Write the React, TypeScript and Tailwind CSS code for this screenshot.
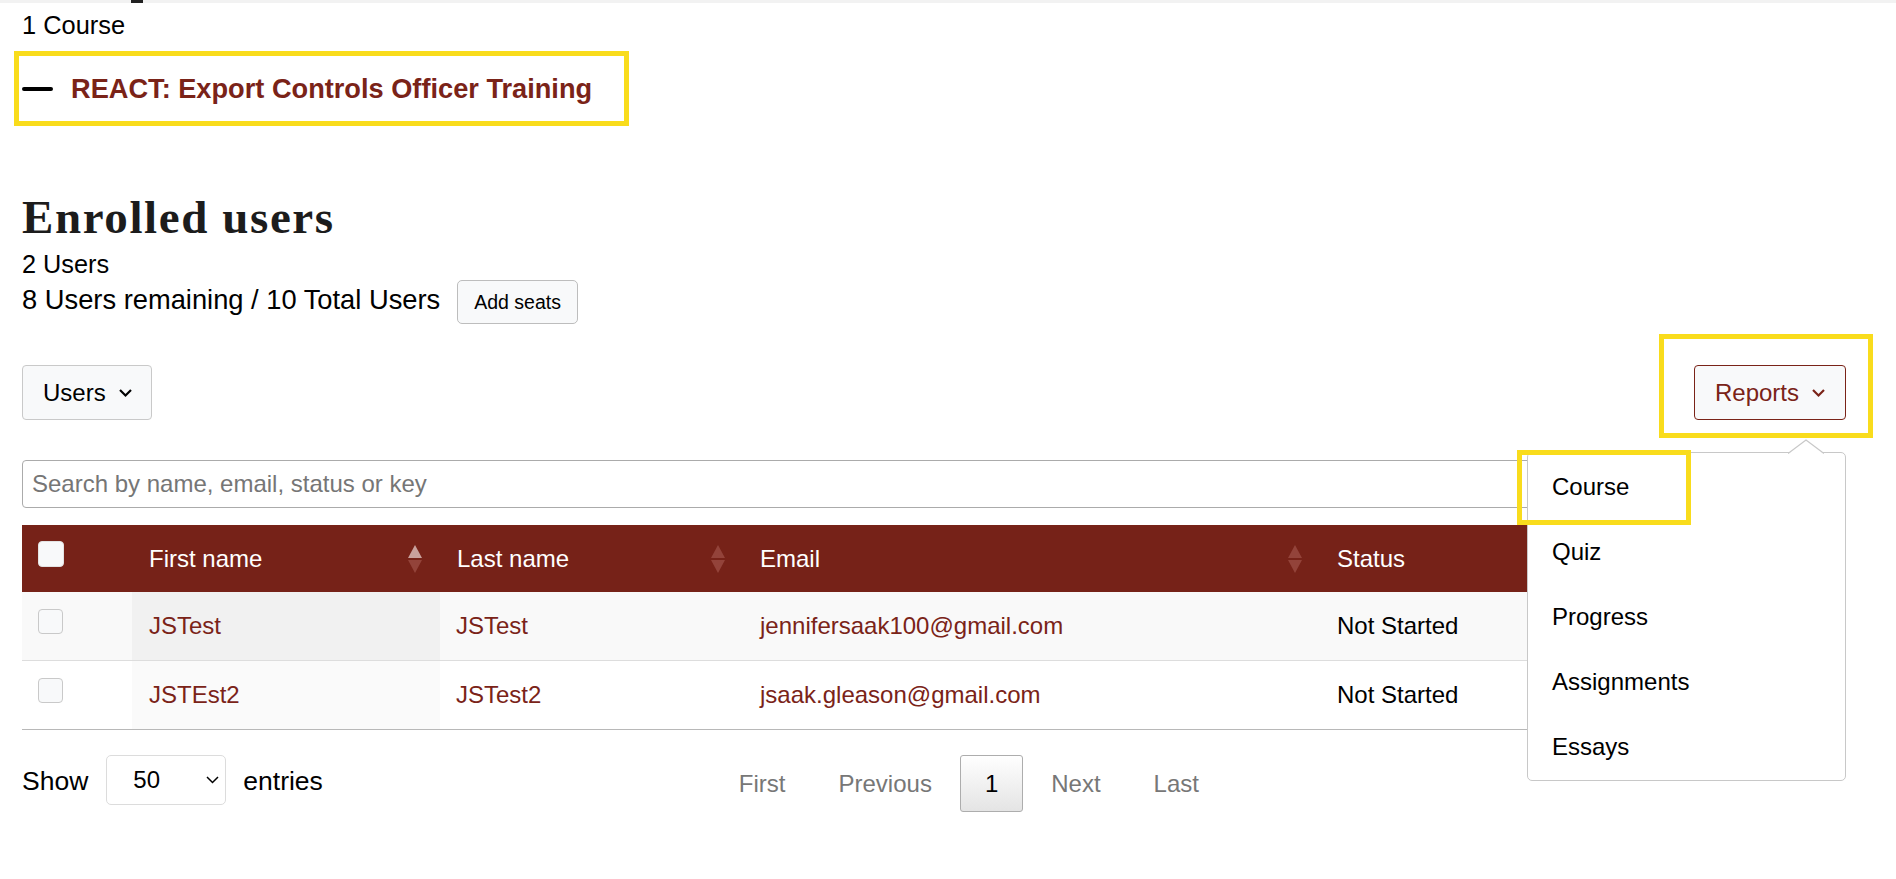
import React from "react"

const users = [
  { first: "JSTest", last: "JSTest", email: "jennifersaak100@gmail.com", status: "Not Started" },
  { first: "JSTEst2", last: "JSTest2", email: "jsaak.gleason@gmail.com", status: "Not Started" },
]

const reportItems = ["Course", "Quiz", "Progress", "Assignments", "Essays"]

function Chevron({ color = "#000", thin }: { color?: string; thin?: boolean }) {
  return (
    <svg width="15" height="10" viewBox="0 0 15 10" fill="none">
      <polyline points="2,2 7.5,7.5 13,2" stroke={color} strokeWidth={thin ? "1.5" : "2.2"} />
    </svg>
  )
}

function SortIcon({ asc }: { asc?: boolean }) {
  return (
    <svg width="14" height="28" viewBox="0 0 14 28" className="shrink-0">
      <path d="M7 0 L14 13 L0 13 Z" fill={asc ? "#c9a19c" : "#93433a"} />
      <path d="M0 15 L14 15 L7 28 Z" fill="#93433a" />
    </svg>
  )
}

function Check({ header }: { header?: boolean }) {
  return (
    <div
      className={
        header
          ? "w-[26px] h-[26px] rounded-[4px] bg-[#f8f9fa] border border-[#e3e3e3] mb-[9px]"
          : "w-[25px] h-[25px] rounded-[4px] bg-[#f8f9fa] border border-[#c9c9c9] mb-[9px]"
      }
    />
  )
}

function HeaderCell({ label, asc }: { label: string; asc?: boolean }) {
  return (
    <th className="p-0 font-normal text-left">
      <div className="flex items-center justify-between pl-[17px] pr-[18px] h-[67px]">
        <span>{label}</span>
        <SortIcon asc={asc} />
      </div>
    </th>
  )
}

export default function App() {
  return (
    <div className="min-h-screen bg-white text-black font-['Liberation_Sans',Arial,sans-serif] text-[24px] leading-[36px]">
      <div className="h-[3px] bg-[#f2f2f2] pl-[131px]">
        <div className="h-[3px] w-[12px] bg-[#222]" />
      </div>

      <div className="pl-[22px] w-[1846px]">
        <div className="mt-[4px] text-[25.4px]">1 Course</div>

        <div className="mt-[8px] -ml-[8px] w-[615px] h-[75px] border-[5px] border-[#f9dc1c] flex items-center pl-[3px]">
          <div className="w-[31px] h-[4px] bg-black rounded-full" />
          <span className="ml-[18px] font-bold text-[27.2px] text-[#7a2318]">
            REACT: Export Controls Officer Training
          </span>
        </div>

        <h1 className="mt-[63px] font-['Liberation_Serif',Georgia,serif] font-bold text-[47px] leading-[56px] tracking-[1.6px] text-[#1c1c1c]">
          Enrolled users
        </h1>
        <div className="mt-[1px] text-[25.3px]">2 Users</div>
        <div className="flex items-start h-[36px]">
          <span className="text-[27.3px]">8 Users remaining / 10 Total Users</span>
          <button className="ml-[17px] -mt-[2px] h-[44px] px-[16px] border border-[#bdbdbd] rounded-[5px] bg-[#f8f9fa] text-[19.5px] leading-[22px] text-black">
            Add seats
          </button>
        </div>

        <div className="mt-[47px] flex justify-between items-start">
          <button className="h-[55px] pl-[20px] pr-[18px] flex items-center gap-[12px] border border-[#c9c9c9] rounded-[4px] bg-[#f8f9fa]">
            <span>Users</span>
            <Chevron />
          </button>

          <div className="relative">
            <button className="h-[55px] pl-[20px] pr-[19px] flex items-center gap-[12px] border border-[#7a2318] rounded-[4px] bg-[#f8f9fa] text-[#7a2318]">
              <span>Reports</span>
              <Chevron color="#7a2318" />
            </button>

            <div className="absolute z-10 right-0 top-[87px] w-[319px] py-[1px] bg-white border border-[#c8c8c8] rounded-[5px]">
              <svg width="36" height="15" viewBox="0 0 36 15" className="absolute -top-[14px] right-[21px]">
                <path d="M0 15 L18 1 L36 15 Z" fill="#fff" />
                <path d="M0 14.5 L18 1 L36 14.5" fill="none" stroke="#c8c8c8" strokeWidth="1.2" />
              </svg>
              {reportItems.map((item) => (
                <div key={item} className="h-[65px] flex items-center pl-[24px] text-black">
                  {item}
                </div>
              ))}
              <div className="absolute -left-[11px] -top-[3px] w-[174px] h-[75px] border-[5px] border-[#f9dc1c] pointer-events-none" />
            </div>

            <div className="absolute z-20 -left-[35px] -top-[31px] w-[214px] h-[104px] border-[5px] border-[#f9dc1c] pointer-events-none" />
          </div>
        </div>

        <div className="mt-[40px] h-[48px] border border-[#ababab] rounded-[4px] flex items-center pl-[9px] text-[#767676]">
          Search by name, email, status or key
        </div>

        <table className="mt-[17px] w-full table-fixed border-collapse">
          <colgroup>
            <col className="w-[110px]" />
            <col className="w-[308px]" />
            <col className="w-[303px]" />
            <col className="w-[577px]" />
            <col />
          </colgroup>
          <thead>
            <tr className="bg-[#762218] text-white">
              <th className="p-0">
                <div className="h-[67px] flex items-center pl-[16px]">
                  <Check header />
                </div>
              </th>
              <HeaderCell label="First name" asc />
              <HeaderCell label="Last name" />
              <HeaderCell label="Email" />
              <HeaderCell label="Status" />
            </tr>
          </thead>
          <tbody>
            {users.map((u, i) => (
              <tr
                key={u.email}
                className={
                  i === 0
                    ? "bg-[#f9f9f9] border-b border-[#dddddd]"
                    : "bg-white border-b border-[#b8b8b8]"
                }
              >
                <td className="p-0">
                  <div className="h-[68px] flex items-center pl-[16px]">
                    <Check />
                  </div>
                </td>
                <td className={i === 0 ? "pl-[17px] bg-[#f1f1f1] text-[#7a2318]" : "pl-[17px] bg-[#fafafa] text-[#7a2318]"}>
                  {u.first}
                </td>
                <td className="pl-[16px] text-[#7a2318]">{u.last}</td>
                <td className="pl-[17px] text-[#7a2318]">{u.email}</td>
                <td className="pl-[17px]">{u.status}</td>
              </tr>
            ))}
          </tbody>
        </table>

        <div className="mt-[25px] flex items-start">
          <span className="mt-[8px] text-[26.5px]">Show</span>
          <div className="ml-[18px] w-[120px] h-[50px] border border-[#dcdcdc] rounded-[5px] flex items-center justify-between pl-[26px] pr-[5px]">
            <span>50</span>
            <Chevron thin />
          </div>
          <span className="ml-[17px] mt-[8px] text-[26.5px]">entries</span>

          <div className="ml-[388px] flex items-start text-[#777777]">
            {["First", "Previous", "1", "Next", "Last"].map((p) => (
              <span
                key={p}
                className={
                  p === "1"
                    ? "ml-[3px] px-[24px] py-[10px] leading-[35px] border border-[#adadad] rounded-[3px] bg-gradient-to-b from-white to-[#e4e4e4] text-black"
                    : "ml-[3px] px-[24px] py-[10px] leading-[35px] border border-transparent"
                }
              >
                {p}
              </span>
            ))}
          </div>
        </div>
      </div>
    </div>
  )
}
